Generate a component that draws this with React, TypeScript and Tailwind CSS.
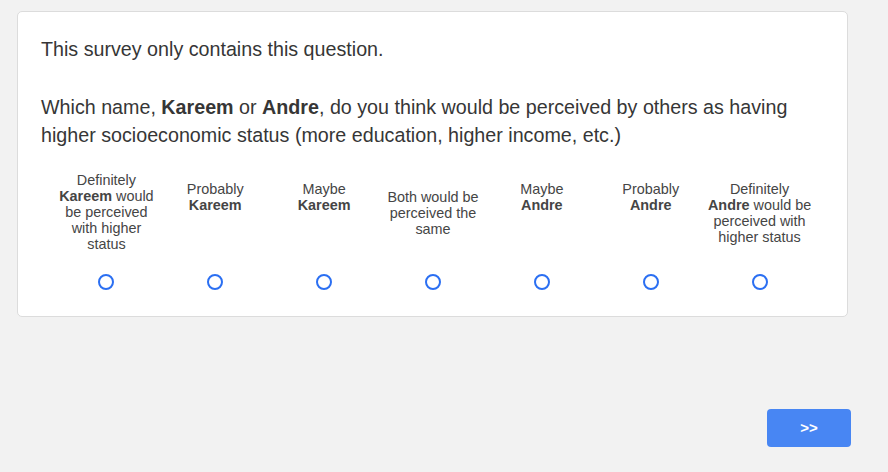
import React, { useState } from 'react';

const choices: { label: React.ReactNode; pad: string }[] = [
  {
    label: (
      <>
        Definitely
        <br />
        <b>Kareem</b> would be perceived with higher status
      </>
    ),
    pad: 'pt-0',
  },
  { label: (<>Probably<br /><b>Kareem</b></>), pad: 'pt-[9px]' },
  { label: (<>Maybe<br /><b>Kareem</b></>), pad: 'pt-[9px]' },
  { label: <>Both would be perceived the same</>, pad: 'pt-[17px]' },
  { label: (<>Maybe<br /><b>Andre</b></>), pad: 'pt-[9px]' },
  { label: (<>Probably<br /><b>Andre</b></>), pad: 'pt-[9px]' },
  {
    label: (
      <>
        Definitely
        <br />
        <b>Andre</b> would be perceived with higher status
      </>
    ),
    pad: 'pt-[9px]',
  },
];

export default function App() {
  const [picked, setPicked] = useState<number | null>(null);

  return (
    <div className="w-[888px] h-[472px] bg-[#f2f2f2] font-['Liberation_Sans',Arial,sans-serif] flex flex-col">
      {/* question card */}
      <div className="ml-[17px] mt-[11px] w-[831px] h-[306px] bg-white border border-[#dcdcdc] rounded-[5px] pl-[23px] pr-[24px] pt-[24px]">
        <p className="text-[19.7px] leading-[26px] text-[#363636]">This survey only contains this question.</p>
        <p className="mt-[31px] text-[19.7px] leading-[28px] text-[#363636]">
          Which name, <b>Kareem</b> or <b>Andre</b>, do you think would be perceived by others as having higher
          socioeconomic status (more education, higher income, etc.)
        </p>

        <div className="mt-[23px] ml-[11px] w-[762px] grid grid-cols-7">
          {choices.map((c, i) => (
            <div key={i} className="flex flex-col items-center">
              <div
                className={`h-[102px] w-[108px] text-center text-[14.4px] leading-[16px] text-[#454545] ${c.pad}`}
              >
                {c.label}
              </div>
              <button
                onClick={() => setPicked(i)}
                className="w-[16px] h-[16px] rounded-full border-2 border-[#2b6ff2] flex items-center justify-center"
                aria-label={`choice ${i + 1}`}
              >
                {picked === i && <span className="w-[8px] h-[8px] rounded-full bg-[#2b6ff2]" />}
              </button>
            </div>
          ))}
        </div>
      </div>

      <div className="mt-[92px] mr-[37px] flex justify-end">
        <button className="w-[84px] h-[38px] rounded-[4px] bg-[#4886f3] text-white text-[15px] font-bold">
          &gt;&gt;
        </button>
      </div>
    </div>
  );
}
